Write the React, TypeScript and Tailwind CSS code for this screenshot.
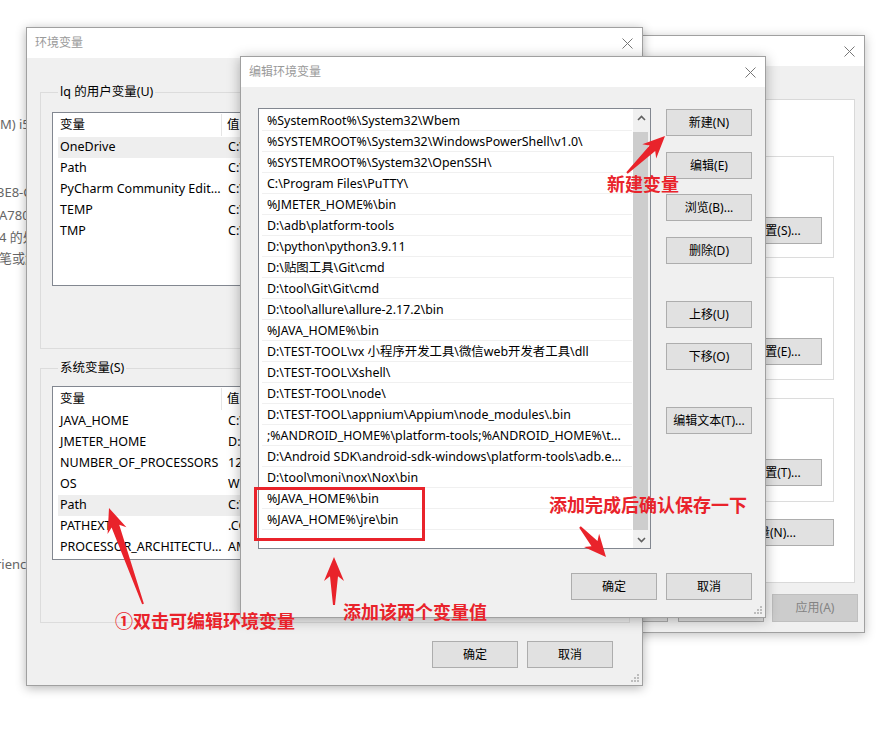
import React from "react";

type Pt = [number, number];

function arrowPoints(tail: Pt, tip: Pt, headLen: number, headW: number, neckW: number, tailW: number) {
  const [tx, ty] = tail;
  const [hx, hy] = tip;
  const dx = hx - tx;
  const dy = hy - ty;
  const len = Math.hypot(dx, dy);
  const ux = dx / len;
  const uy = dy / len;
  const px = -uy;
  const py = ux;
  const bx = hx - ux * headLen;
  const by = hy - uy * headLen;
  const bx2 = hx - ux * (headLen * 0.8);
  const by2 = hy - uy * (headLen * 0.8);
  const pts: Pt[] = [
    [tx + px * tailW, ty + py * tailW],
    [bx2 + px * neckW, by2 + py * neckW],
    [bx + px * headW, by + py * headW],
    [hx, hy],
    [bx - px * headW, by - py * headW],
    [bx2 - px * neckW, by2 - py * neckW],
    [tx - px * tailW, ty - py * tailW],
  ];
  return pts.map((p) => `${p[0].toFixed(1)},${p[1].toFixed(1)}`).join(" ");
}

function CloseX() {
  return (
    <svg width="11" height="11" viewBox="0 0 11 11">
      <path d="M0.5 0.5 L10.5 10.5 M10.5 0.5 L0.5 10.5" stroke="#777" strokeWidth="1" fill="none" />
    </svg>
  );
}

function TitleBar({ title }: { title: string }) {
  return (
    <div className="h-[30px] shrink-0 bg-white flex items-center justify-between pl-[8px] pr-[9px]">
      <span className="text-[12px] text-[#9a9a9a]">{title}</span>
      <CloseX />
    </div>
  );
}

function Btn({
  children,
  className = "",
  disabled = false,
}: {
  children: React.ReactNode;
  className?: string;
  disabled?: boolean;
}) {
  return (
    <div
      className={`flex items-center justify-center border text-[12px] whitespace-nowrap shrink-0 ${
        disabled ? "bg-[#cccccc] border-[#bfbfbf] text-[#838383]" : "bg-[#e1e1e1] border-[#adadad] text-black"
      } ${className}`}
    >
      {children}
    </div>
  );
}

function Grip() {
  return (
    <svg width="10" height="10" viewBox="0 0 10 10" fill="#bdbdbd">
      <rect x="7" y="1" width="2" height="2" />
      <rect x="4" y="4" width="2" height="2" />
      <rect x="7" y="4" width="2" height="2" />
      <rect x="1" y="7" width="2" height="2" />
      <rect x="4" y="7" width="2" height="2" />
      <rect x="7" y="7" width="2" height="2" />
    </svg>
  );
}

function VarList({ rows, selected }: { rows: [string, string][]; selected: number }) {
  return (
    <div className="h-[174px] border border-[#828790] bg-white text-[12.5px] text-black overflow-hidden">
      <div className="h-[24px] flex items-center">
        <div className="w-[169px] h-[22px] pl-[7px] flex items-center border-r border-[#e5e5e5]">变量</div>
        <div className="pl-[5px]">值</div>
      </div>
      {rows.map(([k, v], i) => (
        <div
          key={k}
          className={`ml-[5px] h-[21px] flex items-center ${i === selected ? "bg-[#eeeeee]" : ""}`}
        >
          <div className="w-[164px] pl-[2px] truncate">{k}</div>
          <div className="pl-[6px] whitespace-nowrap">{v}</div>
        </div>
      ))}
    </div>
  );
}

const userVars: [string, string][] = [
  ["OneDrive", "C:\\Users\\lq\\OneDrive"],
  ["Path", "C:\\Users\\lq\\AppData\\Local\\Microsoft"],
  ["PyCharm Community Edition", "C:\\Program Files\\JetBrains"],
  ["TEMP", "C:\\Users\\lq\\AppData\\Local\\Temp"],
  ["TMP", "C:\\Users\\lq\\AppData\\Local\\Temp"],
];

const sysVars: [string, string][] = [
  ["JAVA_HOME", "C:\\Program Files\\Java\\jdk1.8.0"],
  ["JMETER_HOME", "D:\\apache-jmeter"],
  ["NUMBER_OF_PROCESSORS", "12"],
  ["OS", "Windows_NT"],
  ["Path", "C:\\Windows\\system32"],
  ["PATHEXT", ".COM;.EXE;.BAT;.CMD"],
  ["PROCESSOR_ARCHITECTURE", "AMD64"],
];

const paths = [
  "%SystemRoot%\\System32\\Wbem",
  "%SYSTEMROOT%\\System32\\WindowsPowerShell\\v1.0\\",
  "%SYSTEMROOT%\\System32\\OpenSSH\\",
  "C:\\Program Files\\PuTTY\\",
  "%JMETER_HOME%\\bin",
  "D:\\adb\\platform-tools",
  "D:\\python\\python3.9.11",
  "D:\\贴图工具\\Git\\cmd",
  "D:\\tool\\Git\\Git\\cmd",
  "D:\\tool\\allure\\allure-2.17.2\\bin",
  "%JAVA_HOME%\\bin",
  "D:\\TEST-TOOL\\vx 小程序开发工具\\微信web开发者工具\\dll",
  "D:\\TEST-TOOL\\Xshell\\",
  "D:\\TEST-TOOL\\node\\",
  "D:\\TEST-TOOL\\appnium\\Appium\\node_modules\\.bin",
  ";%ANDROID_HOME%\\platform-tools;%ANDROID_HOME%\\t...",
  "D:\\Android SDK\\android-sdk-windows\\platform-tools\\adb.e...",
  "D:\\tool\\moni\\nox\\Nox\\bin",
  "%JAVA_HOME%\\bin",
  "%JAVA_HOME%\\jre\\bin",
  "",
];

function Chevron({ up }: { up: boolean }) {
  return (
    <svg width="9" height="6" viewBox="0 0 9 6">
      <path
        d={up ? "M1 5 L4.5 1.5 L8 5" : "M1 1 L4.5 4.5 L8 1"}
        stroke="#606060"
        strokeWidth="1.6"
        fill="none"
      />
    </svg>
  );
}

function EditList() {
  return (
    <div className="w-[393px] h-[441px] shrink-0 border border-[#828790] bg-white flex">
      <div className="flex-1 min-w-0 pl-[3px] pr-px pt-px overflow-hidden">
        {paths.map((p, i) => (
          <div
            key={i}
            className="h-[21px] border-b border-[#f0f0f0] pl-[5px] pt-[2px] flex items-center whitespace-nowrap overflow-hidden text-[12.4px] text-black"
          >
            {p}
          </div>
        ))}
      </div>
      <div className="w-[17px] shrink-0 flex flex-col bg-[#f0f0f0]">
        <div className="h-[17px] flex items-center justify-center">
          <Chevron up />
        </div>
        <div className="h-[6px]" />
        <div className="flex-1 bg-[#cdcdcd] mr-[2px]" />
        <div className="h-px" />
        <div className="h-[17px] flex items-center justify-center">
          <Chevron up={false} />
        </div>
      </div>
    </div>
  );
}

function SysBox({ label, className = "", h }: { label: string; className?: string; h: string }) {
  return (
    <div className={`w-[400px] border border-[#dcdcdc] flex flex-col items-end pr-[11px] pt-[60px] ${h} ${className}`}>
      <Btn className="w-[90px] h-[27px]">{label}</Btn>
    </div>
  );
}

export default function App() {
  const red = "#e9232b";
  return (
    <div className="relative w-[895px] h-[738px] overflow-hidden bg-white font-['Noto_Sans','Noto_Sans_CJK_SC',sans-serif]">
      {/* background window fragments on the desktop */}
      <div className="absolute left-0 top-0 w-[60px] h-[738px] text-[13px] text-[#666] whitespace-nowrap">
        <div className="absolute left-[-4px] top-[115px]">(M) i5-10400</div>
        <div className="absolute left-[-3px] top-[183px]">3E8-C2A1</div>
        <div className="absolute left-[-1px] top-[206px]">A780</div>
        <div className="absolute left-[-1px] top-[228px]">4 的处理器</div>
        <div className="absolute left-[-1px] top-[249px]">笔或触控</div>
        <div className="absolute left-[-4px] top-[555px]">rience</div>
      </div>

      {/* System properties window (back) */}
      <div className="absolute left-[300px] top-[35px] w-[565px] h-[598px] bg-[#f0f0f0] border border-[#a0a0a0] shadow-[0_2px_10px_rgba(0,0,0,0.25)] flex flex-col">
        <TitleBar title="系统属性" />
        <div className="flex flex-col items-end pr-[9px] pt-[33px]">
          <div className="w-[480px] h-[484px] bg-white border border-[#d9d9d9] flex flex-col items-end pr-[20px] pt-[56px]">
            <SysBox label="设置(S)..." h="h-[102px]" />
            <SysBox label="设置(E)..." h="h-[103px]" className="mt-[19px]" />
            <SysBox label="设置(T)..." h="h-[104px]" className="mt-[18px]" />
            <Btn className="mt-[17px] w-[150px] h-[27px]">环境变量(N)...</Btn>
          </div>
        </div>
        <div className="mt-[11px] flex justify-end pr-[6px]">
          <Btn className="w-[86px] h-[28px]">确定</Btn>
          <Btn className="ml-[10px] w-[86px] h-[28px]">取消</Btn>
          <Btn disabled className="ml-[8px] w-[86px] h-[28px]">
            应用(A)
          </Btn>
        </div>
      </div>

      {/* Environment variables window */}
      <div className="absolute left-[26px] top-[27px] w-[617px] h-[659px] bg-[#f0f0f0] border border-[#a0a0a0] shadow-[0_2px_10px_rgba(0,0,0,0.3)] flex flex-col">
        <TitleBar title="环境变量" />
        <div className="pl-[13px] pr-[12px] pt-[26px] flex flex-col">
          <fieldset className="h-[265px] min-w-0 border border-[#dcdcdc] px-[11px]">
            <legend className="ml-[6px] px-[2px] text-[12.5px] leading-[16px] text-black">lq 的用户变量(U)</legend>
            <div className="mt-[12px]">
              <VarList rows={userVars} selected={0} />
            </div>
            <div className="mt-[10px] flex justify-end gap-[9px]">
              <Btn className="w-[86px] h-[27px]">新建(N)...</Btn>
              <Btn className="w-[86px] h-[27px]">编辑(E)...</Btn>
              <Btn className="w-[86px] h-[27px]">删除(D)</Btn>
            </div>
          </fieldset>
          <fieldset className="mt-[11px] h-[263px] min-w-0 border border-[#dcdcdc] px-[11px]">
            <legend className="ml-[6px] px-[2px] text-[12.5px] leading-[16px] text-black">系统变量(S)</legend>
            <div className="mt-[10px]">
              <VarList rows={sysVars} selected={4} />
            </div>
            <div className="mt-[10px] flex justify-end gap-[9px]">
              <Btn className="w-[86px] h-[27px]">新建(W)...</Btn>
              <Btn className="w-[86px] h-[27px]">编辑(I)...</Btn>
              <Btn className="w-[86px] h-[27px]">删除(L)</Btn>
            </div>
          </fieldset>
          <div className="mt-[18px] flex justify-end gap-[9px] pr-[17px]">
            <Btn className="w-[86px] h-[27px]">确定</Btn>
            <Btn className="w-[86px] h-[27px]">取消</Btn>
          </div>
        </div>
        <div className="absolute right-[2px] bottom-[2px]">
          <Grip />
        </div>
      </div>

      {/* Edit environment variable dialog */}
      <div className="absolute left-[240px] top-[56px] w-[526px] h-[562px] bg-[#f0f0f0] border border-[#a0a0a0] shadow-[0_2px_12px_rgba(0,0,0,0.3)] flex flex-col">
        <TitleBar title="编辑环境变量" />
        <div className="flex pl-[17px] pt-[21px]">
          <EditList />
          <div className="ml-[15px] flex flex-col w-[86px]">
            <Btn className="mt-px h-[27px]">新建(N)</Btn>
            <Btn className="mt-[16px] h-[27px]">编辑(E)</Btn>
            <Btn className="mt-[15px] h-[27px]">浏览(B)...</Btn>
            <Btn className="mt-[16px] h-[27px]">删除(D)</Btn>
            <Btn className="mt-[37px] h-[27px]">上移(U)</Btn>
            <Btn className="mt-[15px] h-[27px]">下移(O)</Btn>
            <Btn className="mt-[37px] h-[27px]">编辑文本(T)...</Btn>
          </div>
        </div>
        <div className="mt-[24px] flex justify-end gap-[9px] pr-[13px]">
          <Btn className="w-[86px] h-[27px]">确定</Btn>
          <Btn className="w-[86px] h-[27px]">取消</Btn>
        </div>
        <div className="absolute right-[2px] bottom-[2px]">
          <Grip />
        </div>
      </div>

      {/* Annotations */}
      <div className="absolute left-[254px] top-[487px] w-[171px] h-[54px] border-[3px] border-[#e9232b]" />

      <svg className="absolute left-0 top-0 pointer-events-none" width="895" height="738" viewBox="0 0 895 738">
        <polygon points={arrowPoints([627, 173], [665, 136], 22, 10, 4, 1)} fill={red} />
        <polygon points={arrowPoints([143, 604], [109, 508], 24, 10, 4, 1)} fill={red} />
        <polygon points={arrowPoints([334, 605], [334, 557], 24, 10, 4, 1)} fill={red} />
        <polygon points={arrowPoints([580, 527], [606, 557], 22, 10, 4, 1)} fill={red} />
      </svg>

      <div className="absolute left-[607px] top-[174px] text-[18px] leading-[18px] font-bold text-[#e9232b] whitespace-nowrap font-['Noto_Sans_CJK_SC',sans-serif]">
        新建变量
      </div>
      <div className="absolute left-[115px] top-[611px] text-[18px] leading-[18px] font-bold text-[#e9232b] whitespace-nowrap font-['Noto_Sans_CJK_SC',sans-serif]">
        ①双击可编辑环境变量
      </div>
      <div className="absolute left-[343px] top-[602px] text-[18px] leading-[18px] font-bold text-[#e9232b] whitespace-nowrap font-['Noto_Sans_CJK_SC',sans-serif]">
        添加该两个变量值
      </div>
      <div className="absolute left-[549px] top-[495px] text-[18px] leading-[18px] font-bold text-[#e9232b] whitespace-nowrap font-['Noto_Sans_CJK_SC',sans-serif]">
        添加完成后确认保存一下
      </div>
    </div>
  );
}
